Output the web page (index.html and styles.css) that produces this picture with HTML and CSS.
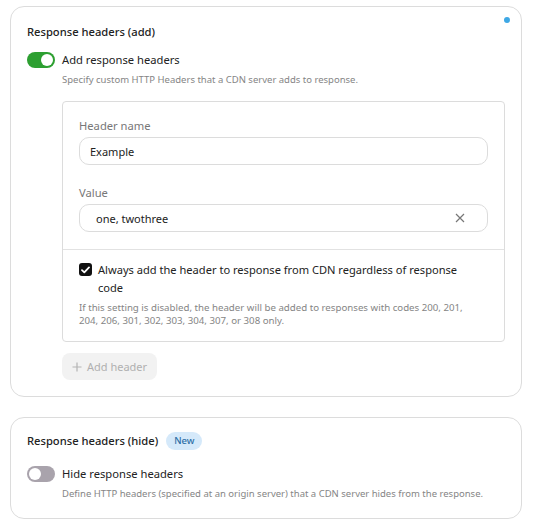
FILE: index.html
```html
<!DOCTYPE html>
<html>
<head>
<meta charset="utf-8">
<link rel="stylesheet" href="styles.css">
</head>
<body>
<div class="page">
  <section class="card">
    <span class="dot"></span>
    <h2 class="title">Response headers (add)</h2>
    <div class="toggle-row">
      <span class="toggle on"><span class="knob"></span></span>
      <span class="toggle-label">Add response headers</span>
    </div>
    <p class="desc">Specify custom HTTP Headers that a CDN server adds to response.</p>
    <div class="indent">
      <div class="box">
        <div class="box-fields">
          <label class="field-label">Header name</label>
          <div class="input"><span class="input-text">Example</span></div>
          <label class="field-label second">Value</label>
          <div class="input value"><span class="input-text">one, twothree</span>
            <svg class="clear" width="10" height="10" viewBox="0 0 10 10"><path d="M1 1L9 9M9 1L1 9" stroke="#777" stroke-width="1.2" fill="none"/></svg>
          </div>
        </div>
        <div class="box-check">
          <div class="check-row">
            <span class="checkbox"><svg width="9" height="8" viewBox="0 0 9 8"><path d="M1 4.2L3.3 6.4L8 1.4" stroke="#fff" stroke-width="1.8" fill="none" stroke-linecap="round" stroke-linejoin="round"/></svg></span>
            <span class="check-label">Always add the header to response from CDN regardless of response code</span>
          </div>
          <p class="help">If this setting is disabled, the header will be added to responses with codes 200, 201, 204, 206, 301, 302, 303, 304, 307, or 308 only.</p>
        </div>
      </div>
      <button class="add-btn"><svg width="10" height="10" viewBox="0 0 10 10"><path d="M5 0.5V9.5M0.5 5H9.5" stroke="#b3b3b3" stroke-width="1.2"/></svg>Add header</button>
    </div>
  </section>
  <section class="card card2">
    <h2 class="title">Response headers (hide) <span class="badge">New</span></h2>
    <div class="toggle-row">
      <span class="toggle off"><span class="knob"></span></span>
      <span class="toggle-label">Hide response headers</span>
    </div>
    <p class="desc">Define HTTP headers (specified at an origin server) that a CDN server hides from the response.</p>
  </section>
</div>
</body>
</html>
```

FILE: styles.css
```css
* { box-sizing: border-box; }
body {
  margin: 0;
  background: #fff;
  font-family: "Noto Sans", "Open Sans", sans-serif;
  color: #2b2b2b;
}
.page {
  padding: 6px 12px 0 10px;
  display: flex;
  flex-direction: column;
  gap: 20px;
}
.card {
  position: relative;
  border: 1px solid #dcdcdc;
  border-radius: 14px;
  padding: 16px 16px 16px 16px;
}
.card2 { padding-top: 14px; }
.dot {
  position: absolute;
  top: 10px;
  right: 11px;
  width: 6px;
  height: 6px;
  border-radius: 50%;
  background: #3ea8e5;
}
.title {
  margin: 0;
  font-size: 11.2px;
  font-weight: 500;
  line-height: 18px;
  display: flex;
  align-items: center;
  gap: 8px;
  color: #222;
}
.badge {
  display: inline-block;
  background: #d5e9fa;
  color: #2d6ea6;
  font-size: 9.5px;
  font-weight: 500;
  line-height: 18px;
  padding: 0 8px;
  border-radius: 9px;
}
.toggle-row {
  margin-top: 10px;
  display: flex;
  align-items: center;
  gap: 7px;
  line-height: 18px;
}
.card2 .toggle-row { margin-top: 15px; }
.toggle {
  width: 28px;
  height: 16px;
  border-radius: 8px;
  display: flex;
  align-items: center;
  padding: 2px;
}
.toggle.on { background: #2d9f31; justify-content: flex-end; }
.toggle.off { background: #a9a3ac; justify-content: flex-start; }
.knob {
  width: 12px;
  height: 12px;
  border-radius: 50%;
  background: #fff;
}
.toggle-label {
  font-size: 11.2px;
  color: #222;
}
.desc {
  margin: 3px 0 0 35px;
  font-size: 9.5px;
  line-height: 16px;
  color: #858585;
}
.indent {
  margin: 13px 0 0 35px;
}
.box {
  border: 1px solid #dcdcdc;
  border-radius: 4px;
}
.box-fields {
  padding: 15px 16px 17px 16px;
  display: flex;
  flex-direction: column;
  border-bottom: 1px solid #e2e2e2;
}
.field-label {
  font-size: 11.2px;
  line-height: 18px;
  color: #777;
  margin-bottom: 2px;
}
.field-label.second { margin-top: 19px; }
.input {
  height: 28px;
  border: 1px solid #dcdcdc;
  border-radius: 10px;
  display: flex;
  align-items: center;
  padding: 0 10px;
  font-size: 11px;
  color: #222;
}
.input.value { padding-left: 16px; padding-right: 22px; justify-content: space-between; }
.clear { display: block; }
.box-check {
  padding: 11px 16px 14px 16px;
}
.check-row {
  display: flex;
  align-items: flex-start;
  gap: 6px;
  padding-right: 12px;
}
.checkbox {
  flex: none;
  width: 13px;
  height: 13px;
  margin-top: 2px;
  border-radius: 3px;
  background: #111;
  display: flex;
  align-items: center;
  justify-content: center;
}
.check-label {
  font-size: 11.1px;
  line-height: 18px;
  color: #222;
}
.help {
  margin: 4px 0 0 0;
  padding-right: 8px;
  font-size: 9.7px;
  line-height: 13px;
  color: #858585;
}
.add-btn {
  margin-top: 11px;
  height: 27px;
  padding: 0 10px;
  border: none;
  border-radius: 8px;
  background: #f2f2f2;
  color: #b0b0b0;
  font-family: inherit;
  font-size: 11px;
  display: flex;
  align-items: center;
  gap: 5px;
}
```
